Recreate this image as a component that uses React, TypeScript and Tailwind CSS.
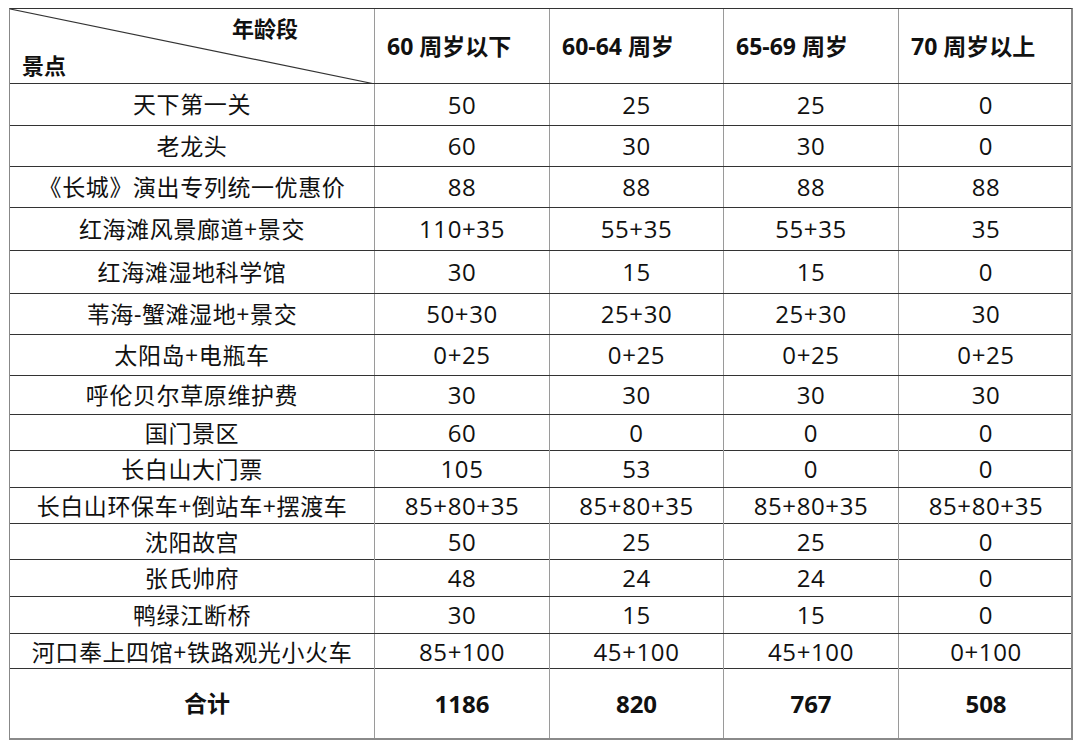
import React from 'react';

const cols = ['60 周岁以下', '60-64 周岁', '65-69 周岁', '70 周岁以上'];

const rows: { name: string; v: string[]; h: number }[] = [
    { name: '天下第一关', v: ['50', '25', '25', '0'], h: 42 },
    { name: '老龙头', v: ['60', '30', '30', '0'], h: 41 },
    { name: '《长城》演出专列统一优惠价', v: ['88', '88', '88', '88'], h: 41 },
    { name: '红海滩风景廊道+景交', v: ['110+35', '55+35', '55+35', '35'], h: 43 },
    { name: '红海滩湿地科学馆', v: ['30', '15', '15', '0'], h: 43 },
    { name: '苇海-蟹滩湿地+景交', v: ['50+30', '25+30', '25+30', '30'], h: 41 },
    { name: '太阳岛+电瓶车', v: ['0+25', '0+25', '0+25', '0+25'], h: 41 },
    { name: '呼伦贝尔草原维护费', v: ['30', '30', '30', '30'], h: 39 },
    { name: '国门景区', v: ['60', '0', '0', '0'], h: 36 },
    { name: '长白山大门票', v: ['105', '53', '0', '0'], h: 37 },
    { name: '长白山环保车+倒站车+摆渡车', v: ['85+80+35', '85+80+35', '85+80+35', '85+80+35'], h: 36 },
    { name: '沈阳故宫', v: ['50', '25', '25', '0'], h: 36 },
    { name: '张氏帅府', v: ['48', '24', '24', '0'], h: 37 },
    { name: '鸭绿江断桥', v: ['30', '15', '15', '0'], h: 37 },
    { name: '河口奉上四馆+铁路观光小火车', v: ['85+100', '45+100', '45+100', '0+100'], h: 35 },
];

const grid = 'grid grid-cols-[365px_175px_174px_175px_174px]';
const cell = 'flex items-center justify-center border-r border-[#9a9a9a] last:border-r-0';

export default function App() {
    return (
        <div className="w-[1080px] h-[745px] bg-white pt-2 pl-[9px] text-[#111]" style={{ fontFamily: '"Open Sans", "Noto Sans CJK SC", sans-serif' }}>
            <div className="w-[1064px] border-t border-[#333] border-l border-l-[#888] border-r-2 border-r-[#8a8a8a] border-b-2 border-b-[#8a8a8a]">
                {/* header */}
                <div className={`${grid} h-[75px] border-b border-[#333] text-[23px] font-bold`}>
                    <div className="relative border-r border-[#9a9a9a] text-[22px]">
                        <svg className="absolute inset-0" width="365" height="75" viewBox="0 0 365 75">
                            <line x1="0" y1="0" x2="365" y2="75" stroke="#333" strokeWidth="1.2" />
                        </svg>
                        <span className="absolute left-[222px] top-[3px]">年龄段</span>
                        <span className="absolute left-[12px] top-[40px]">景点</span>
                    </div>
                    {cols.map((c) => (
                        <div key={c} className="flex items-center pl-[12px] border-r border-[#9a9a9a] last:border-r-0">{c}</div>
                    ))}
                </div>
                {rows.map((r) => (
                    <div key={r.name} className={`${grid} border-b border-[#333]`} style={{ height: r.h }}>
                        <div className={`${cell} text-[23px] tracking-[0.6px]`}>{r.name}</div>
                        {r.v.map((x, i) => (
                            <div key={i} className={`${cell} text-[24px] tracking-[0.6px]`}>{x}</div>
                        ))}
                    </div>
                ))}
                <div className={`${grid} h-[69px] font-bold text-[24px]`}>
                    <div className={`${cell} text-[23px] pl-[30px]`}>合计</div>
                    {['1186', '820', '767', '508'].map((x) => (
                        <div key={x} className={cell}>{x}</div>
                    ))}
                </div>
            </div>
        </div>
    );
}
